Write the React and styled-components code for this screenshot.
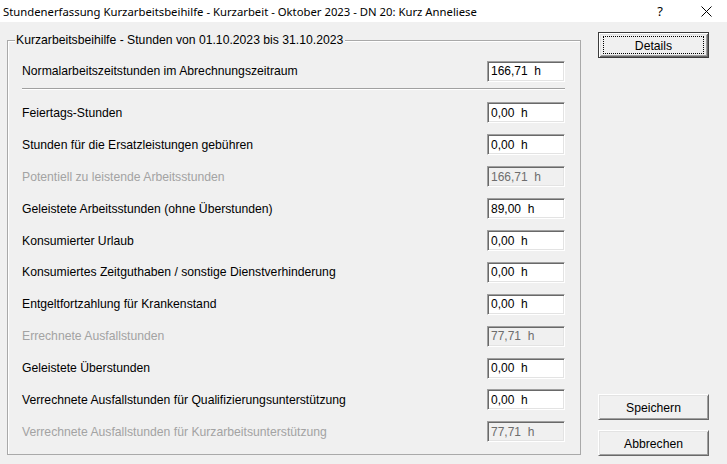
import React from "react";
import styled, { createGlobalStyle } from "styled-components";

const Global = createGlobalStyle`
  html, body { margin: 0; padding: 0; background: #f0f0f0; }
  * { box-sizing: border-box; }
`;

const Window = styled.div`
  width: 727px;
  height: 464px;
  background: #f0f0f0;
  display: flex;
  flex-direction: column;
  overflow: hidden;
  font-family: "Liberation Sans", Arial, sans-serif;
  font-size: 12.2px;
  color: #000;
`;

const TitleBar = styled.div`
  height: 22px;
  background: #fff;
  display: flex;
  align-items: center;
  padding: 0 0 0 3px;
  font-family: "Noto Sans", "Open Sans", sans-serif;
  font-size: 11.3px;
  color: #000;
`;

const TitleText = styled.div`
  flex: 1;
  white-space: nowrap;
`;

const TitleButton = styled.div`
  width: 46px;
  height: 22px;
  display: flex;
  align-items: center;
  justify-content: center;
  font-size: 13px;
  margin-right: ${(p) => p.$mr || 0}px;
`;

const Body = styled.div`
  flex: 1;
  display: flex;
`;

const Group = styled.div`
  position: relative;
  margin: 18px 0 0 7px;
  width: 574px;
  height: 415px;
  border: 1px solid #a9a9a9;
  box-shadow: inset 1px 1px #fff;
  padding: 14px 15px 0 14px;
  display: flex;
  flex-direction: column;
`;

const Legend = styled.div`
  position: absolute;
  top: -9px;
  left: 7px;
  padding: 0 2px 0 1px;
  background: #f0f0f0;
  line-height: 16px;
  white-space: nowrap;
`;

const Row = styled.div`
  height: ${(p) => p.$h || 31.9}px;
  display: flex;
  align-items: center;
  justify-content: space-between;
`;

const Label = styled.span`
  color: ${(p) => (p.$disabled ? "#a3a3a3" : "#000")};
  white-space: nowrap;
`;

const Field = styled.div`
  width: 78px;
  height: 21px;
  background: ${(p) => (p.$disabled ? "#f0f0f0" : "#fff")};
  color: ${(p) => (p.$disabled ? "#6d6d6d" : "#000")};
  border-top: 1px solid #a0a0a0;
  border-left: 1px solid #a0a0a0;
  border-right: 1px solid #fff;
  border-bottom: 1px solid #fff;
  box-shadow: inset 1px 1px #696969, inset -1px -1px #e3e3e3;
  padding: 0 0 0 3px;
  display: flex;
  align-items: center;
  white-space: pre;
  font-size: 12px;
`;

const Separator = styled.div`
  height: 2px;
  border-top: 1px solid #a0a0a0;
  border-bottom: 1px solid #fff;
  margin: 1px 0 7px;
`;

const Side = styled.div`
  margin-left: 17px;
  width: 111px;
  padding: 10px 0 8px;
  display: flex;
  flex-direction: column;
  justify-content: space-between;
`;

const ButtonStack = styled.div`
  display: flex;
  flex-direction: column;
  gap: 10px;
`;

const Button = styled.div`
  position: relative;
  height: 26px;
  display: flex;
  align-items: center;
  justify-content: center;
  padding-top: 1px;
  background: #f0f0f0;
  border: 1px solid;
  border-color: ${(p) => (p.$default ? "#3c3c3c" : "#fff #696969 #696969 #fff")};
  box-shadow: ${(p) =>
    p.$default
      ? "inset 1px 1px #fff, inset -1px -1px #696969, inset 2px 2px #e3e3e3, inset -2px -2px #a0a0a0"
      : "inset 1px 1px #e3e3e3, inset -1px -1px #a0a0a0"};
  color: #000;
  &::after {
    content: "";
    display: ${(p) => (p.$default ? "block" : "none")};
    position: absolute;
    inset: 3px 4px 3px 4px;
    border: 1px dotted #000;
  }
`;

const rows = [
  { label: "Feiertags-Stunden", value: "0,00  h" },
  { label: "Stunden für die Ersatzleistungen gebühren", value: "0,00  h" },
  { label: "Potentiell zu leistende Arbeitsstunden", value: "166,71  h", disabled: true },
  { label: "Geleistete Arbeitsstunden (ohne Überstunden)", value: "89,00  h" },
  { label: "Konsumierter Urlaub", value: "0,00  h" },
  { label: "Konsumiertes Zeitguthaben / sonstige Dienstverhinderung", value: "0,00  h" },
  { label: "Entgeltfortzahlung für Krankenstand", value: "0,00  h" },
  { label: "Errechnete Ausfallstunden", value: "77,71  h", disabled: true },
  { label: "Geleistete Überstunden", value: "0,00  h" },
  { label: "Verrechnete Ausfallstunden für Qualifizierungsunterstützung", value: "0,00  h" },
  { label: "Verrechnete Ausfallstunden für Kurzarbeitsunterstützung", value: "77,71  h", disabled: true },
];

export default function App() {
  return (
    <>
      <Global />
      <Window>
        <TitleBar>
          <TitleText>
            Stundenerfassung Kurzarbeitsbeihilfe - Kurzarbeit - Oktober 2023 - DN 20: Kurz Anneliese
          </TitleText>
          <TitleButton>?</TitleButton>
          <TitleButton $mr={-2}>
            <svg width="11" height="11" viewBox="0 0 11 11">
              <path d="M0.5 0.5 L10.5 10.5 M10.5 0.5 L0.5 10.5" stroke="#000" strokeWidth="1" fill="none" />
            </svg>
          </TitleButton>
        </TitleBar>
        <Body>
          <Group>
            <Legend>Kurzarbeitsbeihilfe - Stunden von 01.10.2023 bis 31.10.2023</Legend>
            <Row $h={32}>
              <Label>Normalarbeitszeitstunden im Abrechnungszeitraum</Label>
              <Field>166,71  h</Field>
            </Row>
            <Separator />
            {rows.map((r) => (
              <Row key={r.label}>
                <Label $disabled={r.disabled}>{r.label}</Label>
                <Field $disabled={r.disabled}>{r.value}</Field>
              </Row>
            ))}
          </Group>
          <Side>
            <Button $default>Details</Button>
            <ButtonStack>
              <Button>Speichern</Button>
              <Button>Abbrechen</Button>
            </ButtonStack>
          </Side>
        </Body>
      </Window>
    </>
  );
}
